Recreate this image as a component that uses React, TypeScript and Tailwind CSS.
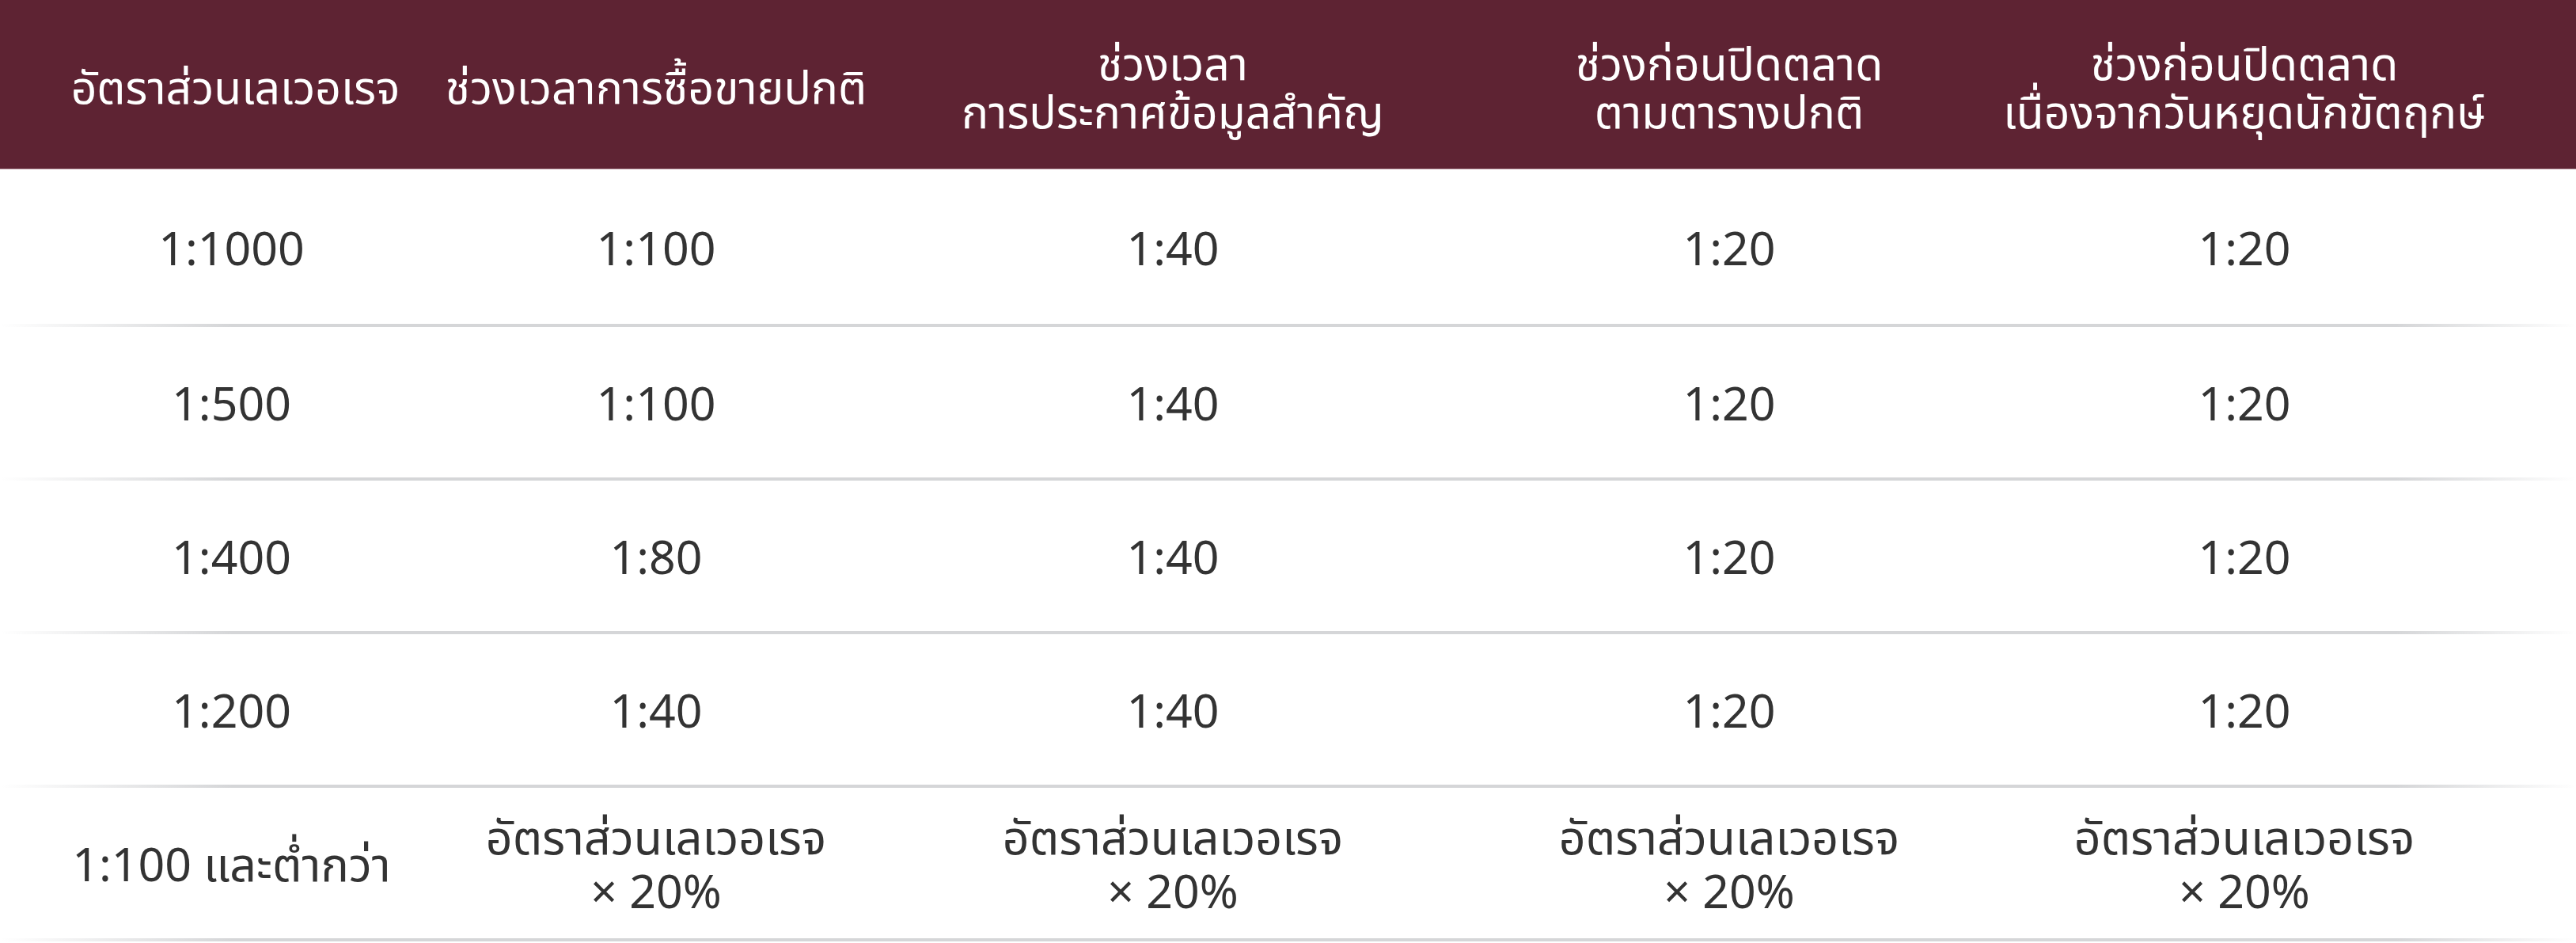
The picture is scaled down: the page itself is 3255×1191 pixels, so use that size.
import React from "react";

const cols = "grid grid-cols-[545px_568px_738px_668px_634px]";

const headers: React.ReactNode[] = [
  "อัตราส่วนเลเวอเรจ",
  "ช่วงเวลาการซื้อขายปกติ",
  <>
    ช่วงเวลา
    <br />
    การประกาศข้อมูลสำคัญ
  </>,
  <>
    ช่วงก่อนปิดตลาด
    <br />
    ตามตารางปกติ
  </>,
  <>
    ช่วงก่อนปิดตลาด
    <br />
    เนื่องจากวันหยุดนักขัตฤกษ์
  </>,
];

const multiplier = (
  <>
    อัตราส่วนเลเวอเรจ
    <br />× 20%
  </>
);

const rows: React.ReactNode[][] = [
  ["1:1000", "1:100", "1:40", "1:20", "1:20"],
  ["1:500", "1:100", "1:40", "1:20", "1:20"],
  ["1:400", "1:80", "1:40", "1:20", "1:20"],
  ["1:200", "1:40", "1:40", "1:20", "1:20"],
  ["1:100 และต่ำกว่า", multiplier, multiplier, multiplier, multiplier],
];

export default function App() {
  return (
    <div
      className="w-[3255px] h-[1191px] bg-white overflow-hidden"
      style={{ fontFamily: "'Noto Sans', 'Noto Sans Thai', 'Noto Sans Thai UI', sans-serif" }}
    >
      {/* header */}
      <div className={`${cols} h-[214px] bg-[#5e2333] border-b border-[#c8aab2]`}>
        {headers.map((h, i) => (
          <div
            key={i}
            className={`flex items-center justify-center text-center whitespace-nowrap text-white text-[57px] leading-[61px] pt-[6px] ${i === 0 ? "pl-[50px]" : ""}`}
          >
            <span>{h}</span>
          </div>
        ))}
      </div>

      {/* body */}
      {rows.map((row, r) => (
        <div key={r}>
          <div className={`${cols} ${r === 0 ? "h-[195px]" : "h-[190px]"}`}>
            {row.map((cell, c) => (
              <div
                key={c}
                className={`flex items-center justify-center text-center whitespace-nowrap text-[#333333] text-[59px] leading-[68px] ${c === 0 ? "pl-[40px]" : ""}`}
              >
                <span>{cell}</span>
              </div>
            ))}
          </div>
          <div className="h-[4px] w-full bg-[linear-gradient(to_right,rgba(213,214,216,0)_0%,#d5d6d8_9%,#d5d6d8_93%,rgba(213,214,216,0)_100%)]" />
        </div>
      ))}
    </div>
  );
}
